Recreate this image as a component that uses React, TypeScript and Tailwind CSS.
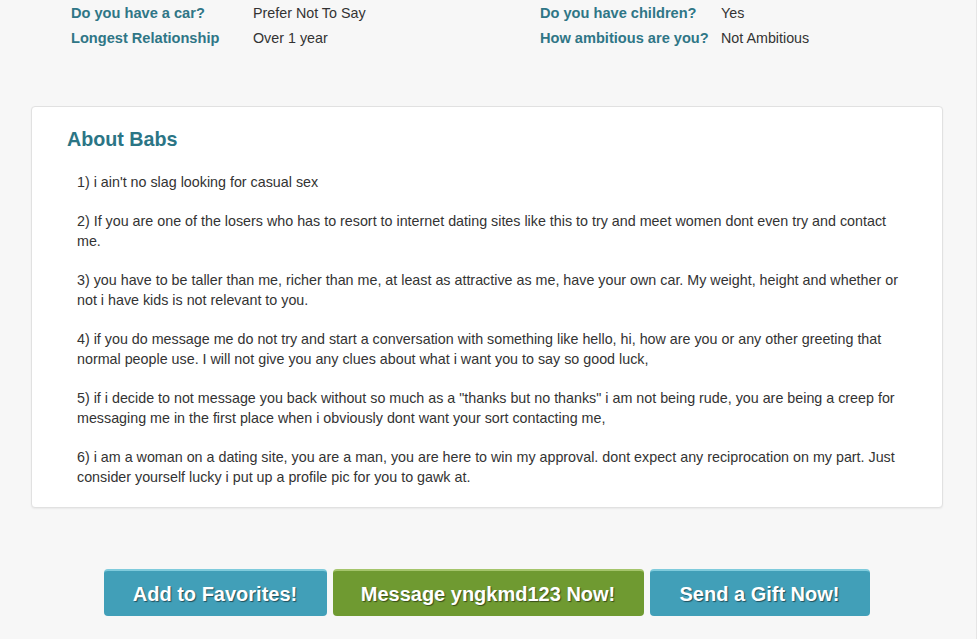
import React from "react";

const details = [
  [
    ["Do you have a car?", "Prefer Not To Say"],
    ["Longest Relationship", "Over 1 year"],
  ],
  [
    ["Do you have children?", "Yes"],
    ["How ambitious are you?", "Not Ambitious"],
  ],
];

const about = [
  "1) i ain't no slag looking for casual sex",
  "2) If you are one of the losers who has to resort to internet dating sites like this to try and meet women dont even try and contact me.",
  "3) you have to be taller than me, richer than me, at least as attractive as me, have your own car. My weight, height and whether or not i have kids is not relevant to you.",
  "4) if you do message me do not try and start a conversation with something like hello, hi, how are you or any other greeting that normal people use. I will not give you any clues about what i want you to say so good luck,",
  "5) if i decide to not message you back without so much as a \"thanks but no thanks\" i am not being rude, you are being a creep for messaging me in the first place when i obviously dont want your sort contacting me,",
  "6) i am a woman on a dating site, you are a man, you are here to win my approval. dont expect any reciprocation on my part. Just consider yourself lucky i put up a profile pic for you to gawk at.",
];

export default function App() {
  return (
    <div
      className="min-h-[639px] w-full bg-[#f7f7f7] border-r border-[#e6e6e6] text-[14.3px] text-[#333]"
      style={{ fontFamily: '"Liberation Sans", Arial, sans-serif' }}
    >
      {/* profile details */}
      <div className="flex pl-[71px] pt-[1px]">
        {details.map((col, i) => (
          <div key={i} className={i === 0 ? "w-[469px]" : ""}>
            {col.map(([label, value]) => (
              <div key={label} className="flex h-[25px] leading-[25px]">
                <span className={`${i === 0 ? "w-[182px]" : "w-[181px]"} text-[14.6px] font-bold text-[#2f7686]`}>{label}</span>
                <span>{value}</span>
              </div>
            ))}
          </div>
        ))}
      </div>

      {/* about card */}
      <div className="mt-[55px] ml-[31px] w-[912px] rounded-[4px] border border-[#e1e1e1] bg-white pt-[20px] pb-[20px] pl-[35px] pr-[44px] shadow-[0_1px_2px_rgba(0,0,0,0.06)]">
        <h2 className="text-[19.7px] leading-[24px] font-bold text-[#2b7585]">About Babs</h2>
        <div className="mt-[21px] pl-[10px]">
          {about.map((p, i) => (
            <p key={i} className={`leading-[20px] ${i < about.length - 1 ? "mb-[19px]" : ""}`}>
              {p}
            </p>
          ))}
        </div>
      </div>

      {/* actions */}
      <div className="mt-[61px] flex justify-center gap-[6px] pr-[3px]">
        <button className="h-[47px] w-[223px] rounded-[4px] border-t-2 border-[#7fcbdc] bg-[#419fb8] text-[20px] font-bold text-white [text-shadow:1px_1px_1px_rgba(0,0,0,0.5)]">
          Add to Favorites!
        </button>
        <button className="h-[47px] w-[311px] rounded-[4px] border-t-2 border-[#a5c56c] bg-[#6f9a31] text-[20px] font-bold text-white [text-shadow:1px_1px_1px_rgba(0,0,0,0.5)]">
          Message yngkmd123 Now!
        </button>
        <button className="h-[47px] w-[220px] rounded-[4px] border-t-2 border-[#7fcbdc] bg-[#419fb8] text-[20px] font-bold text-white [text-shadow:1px_1px_1px_rgba(0,0,0,0.5)]">
          Send a Gift Now!
        </button>
      </div>
    </div>
  );
}
